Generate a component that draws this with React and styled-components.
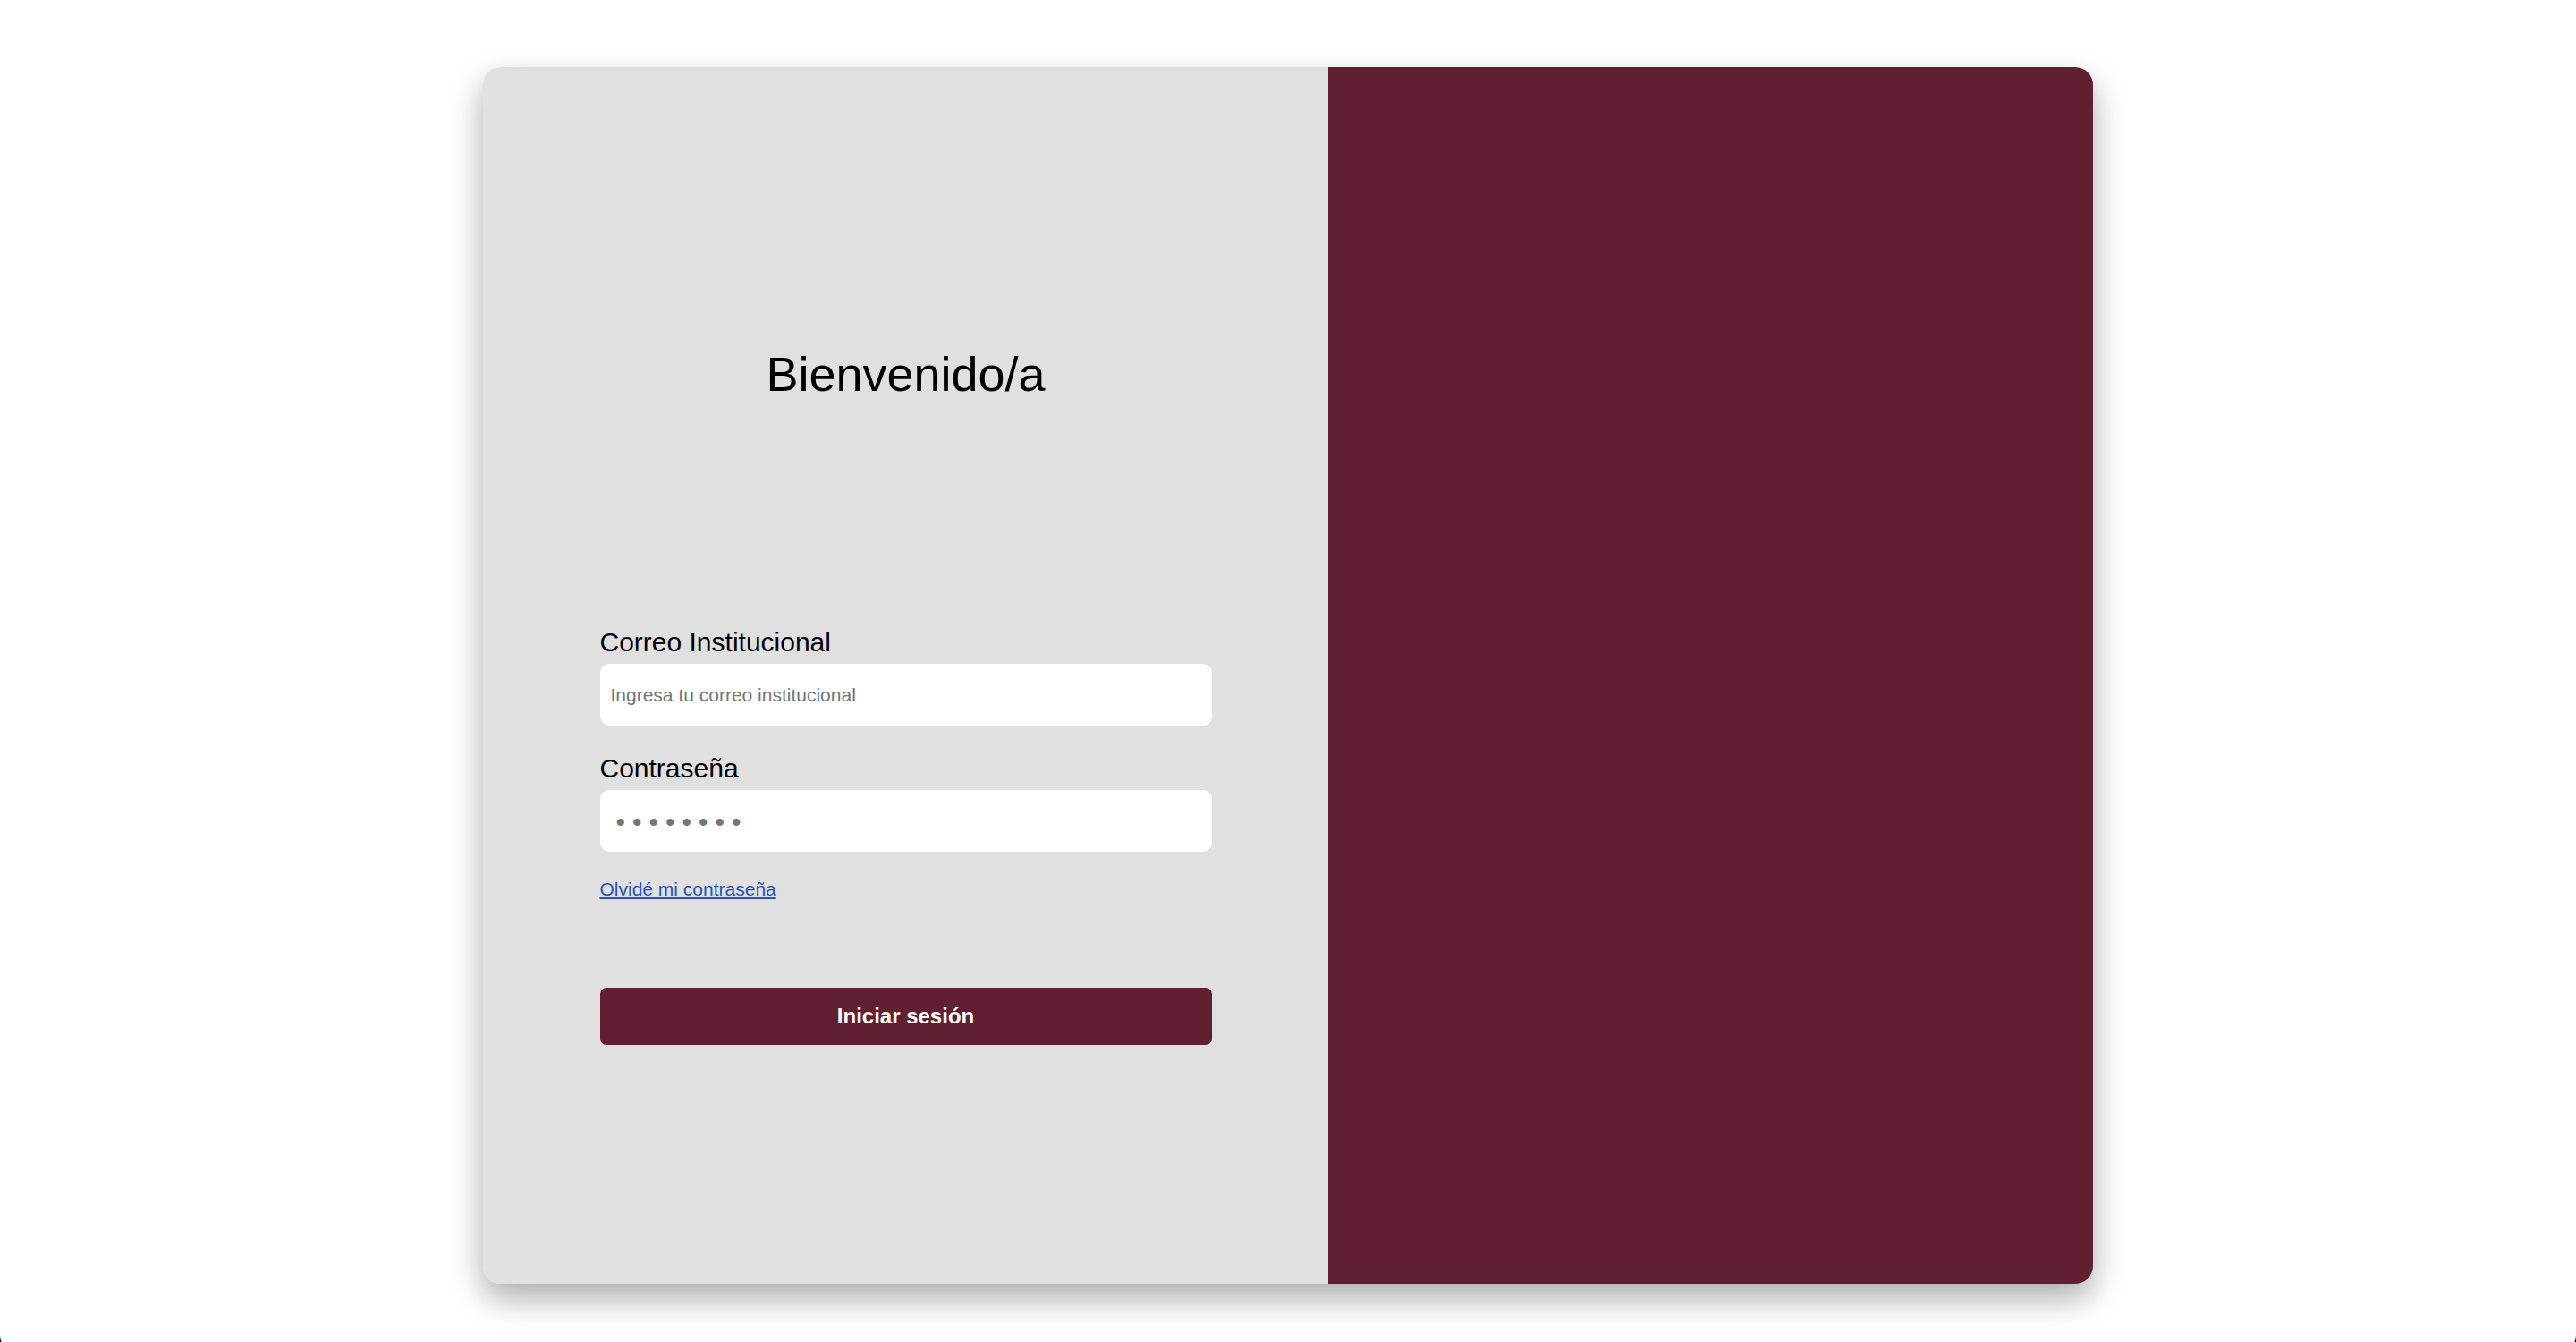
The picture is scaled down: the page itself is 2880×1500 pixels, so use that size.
import React from "react";
import styled, { createGlobalStyle } from "styled-components";

const GlobalStyle = createGlobalStyle`
  html, body {
    margin: 0;
    padding: 0;
    background: #13203d;
    font-family: "Liberation Sans", Arial, sans-serif;
  }
  * {
    box-sizing: border-box;
  }
`;

function App() {
  const [email, setEmail] = React.useState("");
  const [password, setPassword] = React.useState("");

  const handleSubmit = (e) => {
    e.preventDefault();
  };

  return (
    <>
      <GlobalStyle />
      <Page>
        <LoginCard>
          <FormPanel>
            <Title>Bienvenido/a</Title>
            <LoginForm onSubmit={handleSubmit}>
              <FieldGroup>
                <FieldLabel htmlFor="email">Correo Institucional</FieldLabel>
                <TextInput
                  id="email"
                  type="email"
                  placeholder="Ingresa tu correo institucional"
                  value={email}
                  onChange={(e) => setEmail(e.target.value)}
                />
              </FieldGroup>
              <FieldGroup last>
                <FieldLabel htmlFor="password">Contraseña</FieldLabel>
                <TextInput
                  id="password"
                  type="password"
                  dots
                  placeholder="••••••••"
                  value={password}
                  onChange={(e) => setPassword(e.target.value)}
                />
              </FieldGroup>
              <ForgotLink href="#">Olvidé mi contraseña</ForgotLink>
              <SubmitButton type="submit">Iniciar sesión</SubmitButton>
            </LoginForm>
          </FormPanel>
          <BrandPanel />
        </LoginCard>
      </Page>
    </>
  );
}

export default App;

const Page = styled.div`
  height: 1510px;
  background: #ffffff;
  border-radius: 0 0 18px 18px;
  display: flex;
  justify-content: center;
  align-items: center;
`;

const LoginCard = styled.div`
  width: 1800px;
  height: 1360px;
  display: grid;
  grid-template-columns: 945px 1fr;
  border-radius: 20px;
  overflow: hidden;
  box-shadow: 0 16px 36px rgba(0, 0, 0, 0.33);
`;

const FormPanel = styled.div`
  background: #e0e0e0;
  display: flex;
  flex-direction: column;
  align-items: center;
  padding-top: 312px;
`;

const BrandPanel = styled.div`
  background: #602032;
`;

const Title = styled.h1`
  margin: 0;
  font-size: 54px;
  line-height: 62px;
  font-weight: 400;
  color: #000;
`;

const LoginForm = styled.form`
  width: 684px;
  margin-top: 253px;
  display: flex;
  flex-direction: column;
`;

const FieldGroup = styled.div`
  display: flex;
  flex-direction: column;
  margin-bottom: ${(props) => (props.last ? "0" : "32px")};
`;

const FieldLabel = styled.label`
  font-size: 30px;
  line-height: 32px;
  color: #000;
  margin-bottom: 8px;
`;

const TextInput = styled.input`
  width: 100%;
  height: 69px;
  border: none;
  border-radius: 10px;
  background: #ffffff;
  padding: ${(props) => (props.dots ? "8px 12px 0 18px" : "0 12px")};
  font-family: "Liberation Sans", Arial, sans-serif;
  font-size: 21px;
  color: #222;
  outline: none;

  &::placeholder {
    color: #757575;
    ${(props) =>
      props.dots &&
      `
      font-size: 30px;
      letter-spacing: 8px;
    `}
  }
`;

const ForgotLink = styled.a`
  display: block;
  align-self: flex-start;
  margin-top: 30px;
  font-size: 21px;
  line-height: 24px;
  color: #2855b4;
  text-decoration: underline;
`;

const SubmitButton = styled.button`
  margin-top: 98px;
  height: 64px;
  width: 100%;
  border: none;
  border-radius: 7px;
  background: #602032;
  color: #ffffff;
  font-family: "Liberation Sans", Arial, sans-serif;
  font-size: 24px;
  font-weight: 700;
  cursor: pointer;
`;
